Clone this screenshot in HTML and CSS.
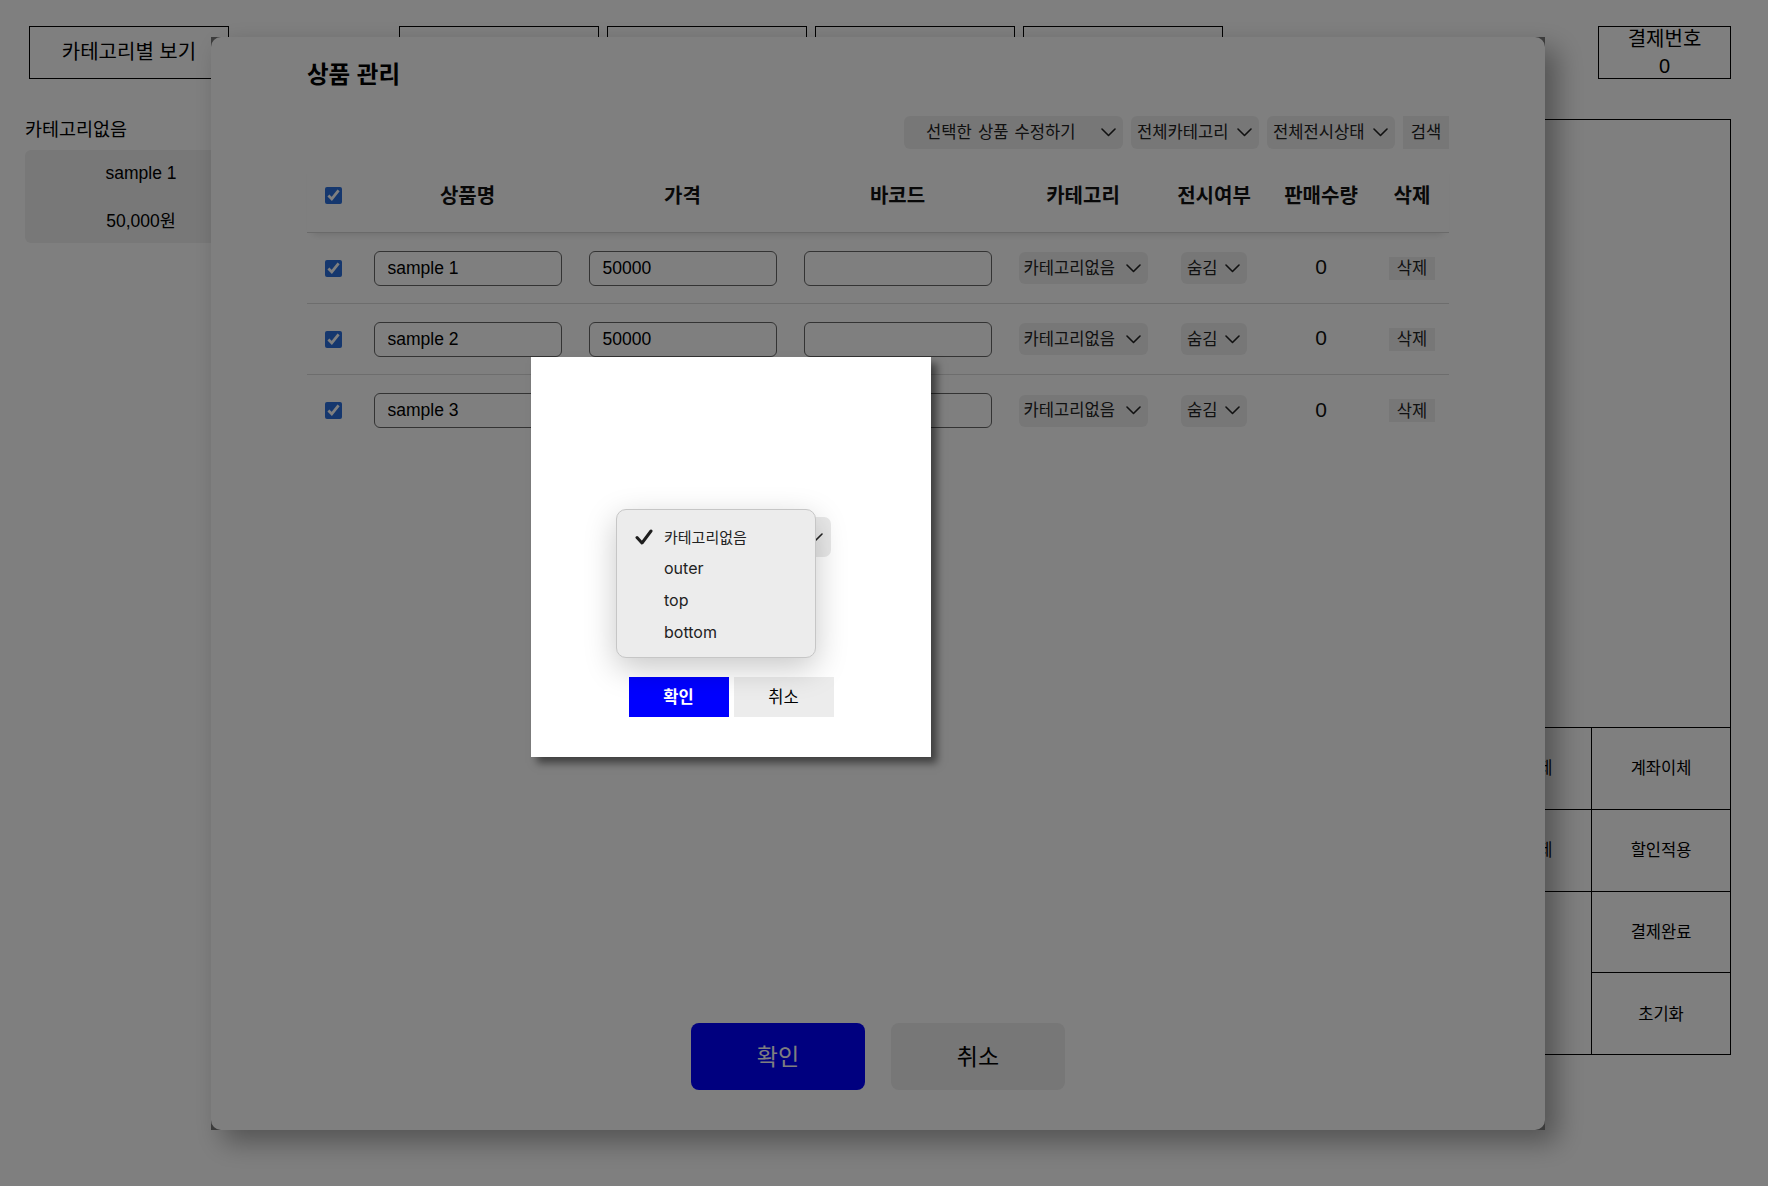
FILE: index.html
```html
<!DOCTYPE html>
<html lang="ko">
<head>
<meta charset="utf-8">
<title>상품 관리</title>
<link rel="stylesheet" href="styles.css">
</head>
<body>
<div class="page">
  <aside class="sidebar">
    <div class="cat-toggle">카테고리별 보기</div>
    <div class="cat-title">카테고리없음</div>
    <div class="product-card">
      <div>sample 1</div>
      <div>50,000원</div>
    </div>
  </aside>
  <main class="center">
    <div class="tabs">
      <div class="tab"></div>
      <div class="tab"></div>
      <div class="tab"></div>
      <div class="tab"></div>
    </div>
  </main>
  <aside class="payment">
    <div class="pay-no"><span>결제번호</span><span>0</span></div>
    <div class="pay-panel">
      <div class="pay-list"></div>
      <div class="pay-grid">
        <div class="pg-cell">카드결제</div>
        <div class="pg-cell">현금결제</div>
        <div class="pg-cell">계좌이체</div>
        <div class="pg-cell">포인트</div>
        <div class="pg-cell">분할결제</div>
        <div class="pg-cell">할인적용</div>
        <div class="pg-cell pg-total">총 결제금액</div>
        <div class="pg-cell">결제완료</div>
        <div class="pg-cell">초기화</div>
      </div>
    </div>
  </aside>
</div>

<div class="modal">
  <div class="modal-inner">
    <h2 class="modal-title">상품 관리</h2>
    <div class="toolbar">
      <div class="sel sel-wide"><span>선택한 상품 수정하기</span><svg class="chev" viewBox="0 0 15 9"><polyline points="1,1 7.5,7.5 14,1"/></svg></div>
      <div class="sel sel-mid"><span>전체카테고리</span><svg class="chev" viewBox="0 0 15 9"><polyline points="1,1 7.5,7.5 14,1"/></svg></div>
      <div class="sel sel-mid"><span>전체전시상태</span><svg class="chev" viewBox="0 0 15 9"><polyline points="1,1 7.5,7.5 14,1"/></svg></div>
      <div class="btn-search">검색</div>
    </div>

    <div class="trow thead">
      <input class="chk" type="checkbox" checked>
      <div>상품명</div>
      <div>가격</div>
      <div>바코드</div>
      <div>카테고리</div>
      <div>전시여부</div>
      <div>판매수량</div>
      <div>삭제</div>
    </div>
    <div class="tbody">
      <div class="trow">
        <input class="chk" type="checkbox" checked>
        <input class="inp" type="text" value="sample 1">
        <input class="inp" type="text" value="50000">
        <input class="inp" type="text" value="">
        <div class="sel sel-row"><span>카테고리없음</span><svg class="chev" viewBox="0 0 15 9"><polyline points="1,1 7.5,7.5 14,1"/></svg></div>
        <div class="sel sel-sm"><span>숨김</span><svg class="chev" viewBox="0 0 15 9"><polyline points="1,1 7.5,7.5 14,1"/></svg></div>
        <div class="qty">0</div>
        <div class="btn-del">삭제</div>
      </div>
      <div class="trow">
        <input class="chk" type="checkbox" checked>
        <input class="inp" type="text" value="sample 2">
        <input class="inp" type="text" value="50000">
        <input class="inp" type="text" value="">
        <div class="sel sel-row"><span>카테고리없음</span><svg class="chev" viewBox="0 0 15 9"><polyline points="1,1 7.5,7.5 14,1"/></svg></div>
        <div class="sel sel-sm"><span>숨김</span><svg class="chev" viewBox="0 0 15 9"><polyline points="1,1 7.5,7.5 14,1"/></svg></div>
        <div class="qty">0</div>
        <div class="btn-del">삭제</div>
      </div>
      <div class="trow">
        <input class="chk" type="checkbox" checked>
        <input class="inp" type="text" value="sample 3">
        <input class="inp" type="text" value="50000">
        <input class="inp" type="text" value="">
        <div class="sel sel-row"><span>카테고리없음</span><svg class="chev" viewBox="0 0 15 9"><polyline points="1,1 7.5,7.5 14,1"/></svg></div>
        <div class="sel sel-sm"><span>숨김</span><svg class="chev" viewBox="0 0 15 9"><polyline points="1,1 7.5,7.5 14,1"/></svg></div>
        <div class="qty">0</div>
        <div class="btn-del">삭제</div>
      </div>
    </div>

    <div class="spacer"></div>
    <div class="footer">
      <div class="fbtn fbtn-ok">확인</div>
      <div class="fbtn fbtn-cancel">취소</div>
    </div>
  </div>
</div>

<div class="dim"></div>

<div class="dialog">
  <div class="dsel"><span class="dsel-text">카테고리없음</span><svg class="chev" viewBox="0 0 15 9"><polyline points="1,1 7.5,7.5 14,1"/></svg></div>
  <div class="dbtns">
    <div class="dbtn dbtn-ok">확인</div>
    <div class="dbtn dbtn-cancel">취소</div>
  </div>
  <div class="popup">
    <div class="item ko"><svg class="check" viewBox="0 0 18 16"><path d="M2 8.5 L7 14 L16 2"/></svg>카테고리없음</div>
    <div class="item">outer</div>
    <div class="item">top</div>
    <div class="item">bottom</div>
  </div>
</div>
</body>
</html>
```
FILE: styles.css
```css
* { box-sizing: border-box; }
html, body { margin: 0; padding: 0; }
body {
  width: 1768px;
  height: 1186px;
  overflow: hidden;
  background: #fff;
  color: #000;
  font-family: "Liberation Sans", "Noto Sans CJK KR", sans-serif;
}

/* ---------- background page ---------- */
.page {
  display: flex;
  height: 100%;
  padding: 26px 37px 0 25px;
}
.sidebar { width: 232px; flex: none; }
.cat-toggle {
  margin-left: 4px;
  width: 200px;
  height: 53px;
  border: 1px solid #000;
  display: flex;
  align-items: center;
  justify-content: center;
  padding-bottom: 4px;
  font-size: 20px;
}
.cat-title {
  margin-top: 38px;
  font-size: 18.5px;
  line-height: 26px;
}
.product-card {
  margin-top: 7px;
  background: #f0f0f0;
  border-radius: 6px;
  padding: 11px 0 10px;
  display: flex;
  flex-direction: column;
  align-items: center;
  gap: 24px;
  font-size: 17.5px;
  line-height: 24px;
}
.center { flex: 1; padding-left: 142px; }
.tabs { display: flex; gap: 8px; }
.tab { width: 200px; height: 53px; border: 1px solid #000; }

.payment {
  width: 418px;
  flex: none;
  display: flex;
  flex-direction: column;
  align-items: flex-end;
}
.pay-no {
  width: 133px;
  height: 53px;
  border: 1px solid #000;
  display: flex;
  flex-direction: column;
  align-items: center;
  justify-content: center;
  font-size: 20px;
  line-height: 27px;
}
.pay-panel {
  margin-top: 40px;
  width: 100%;
  height: 936px;
  border: 1px solid #000;
  display: flex;
  flex-direction: column;
}
.pay-list { flex: 1; }
.pay-grid {
  height: 327px;
  border-top: 1px solid #000;
  background: #000;
  display: grid;
  grid-template-columns: 138px 138px 138px;
  grid-template-rows: repeat(4, 1fr);
  gap: 1px;
}
.pg-cell {
  background: #fff;
  display: flex;
  align-items: center;
  justify-content: center;
  padding-bottom: 2px;
  font-size: 16.5px;
}
.pg-total { grid-column: 1 / 3; grid-row: 3 / 5; }

/* ---------- product modal ---------- */
.modal {
  position: fixed;
  left: 211px;
  top: 37px;
  width: 1334px;
  height: 1093px;
  background: #787878;
  box-shadow: 12px 12px 26px rgba(0, 0, 0, 0.35);
  z-index: 10;
}
.modal-inner {
  height: 100%;
  background: #fff;
  border-radius: 10px;
  display: flex;
  flex-direction: column;
  padding: 22px 96px 40px;
}
.modal-title {
  margin: 0;
  font-size: 23.5px;
  line-height: 32px;
  font-weight: 700;
}
.toolbar {
  margin-top: 25px;
  display: flex;
  justify-content: flex-end;
  gap: 8px;
}
.sel {
  height: 33px;
  background: #efefef;
  border-radius: 6px;
  display: flex;
  align-items: center;
  justify-content: space-between;
  padding: 0 7px 3px 6px;
  font-size: 16.6px;
  color: #222;
  white-space: nowrap;
  word-spacing: 1.5px;
}
.sel .chev { margin-top: 3px; }
.chev {
  width: 15px;
  height: 9px;
  flex: none;
  fill: none;
  stroke: #222;
  stroke-width: 1.6;
  stroke-linecap: round;
  stroke-linejoin: round;
}
.sel-wide { width: 219px; padding-left: 22px; }
.sel-mid { width: 128px; }
.btn-search {
  width: 46px;
  height: 33px;
  background: #efefef;
  display: flex;
  align-items: center;
  justify-content: center;
  padding-bottom: 3px;
  font-size: 16.6px;
  color: #222;
}

.trow {
  display: grid;
  grid-template-columns: 53px 215px 215px 215px 156px 106px 108px 74px;
  align-items: center;
  justify-items: center;
}
.thead {
  margin-top: 10px;
  height: 74px;
  padding-bottom: 2px;
  border-bottom: 1px solid #d4d4d4;
  box-shadow: 0 6px 8px -6px rgba(0, 0, 0, 0.18);
  font-size: 20px;
  font-weight: 700;
  color: #111;
}
.thead .chk { margin-top: 2px; }
.tbody .trow {
  height: 71px;
  border-bottom: 1px solid #dadada;
}
.tbody .trow:last-child { border-bottom: none; }
.chk {
  width: 17px;
  height: 17px;
  margin: 0;
  accent-color: #2a6fdc;
}
.inp {
  width: 188px;
  height: 35px;
  border: 1px solid #666;
  border-radius: 6px;
  padding: 0 13px;
  font-family: "Liberation Sans", sans-serif;
  font-size: 17.5px;
  color: #000;
  background: #fff;
  outline: none;
}
.sel-row { width: 129px; height: 32px; padding-left: 5px; }
.sel-sm { width: 66px; height: 32px; }
.qty { font-size: 21px; color: #111; padding-bottom: 2px; }
.btn-del {
  width: 46px;
  height: 23px;
  background: #efefef;
  display: flex;
  align-items: center;
  justify-content: center;
  padding-bottom: 2px;
  font-size: 16.5px;
  color: #222;
}
.spacer { flex: 1; }
.footer {
  display: flex;
  justify-content: center;
  gap: 26px;
}
.fbtn {
  width: 174px;
  height: 67px;
  border-radius: 8px;
  display: flex;
  align-items: center;
  justify-content: center;
  padding-bottom: 4px;
  font-size: 23px;
}
.fbtn-ok { background: #0000ff; color: #fff; }
.fbtn-cancel { background: #eeeeee; color: #000; }

/* ---------- dim layer ---------- */
.dim {
  position: fixed;
  inset: 0;
  background: rgba(0, 0, 0, 0.5);
  z-index: 20;
}

/* ---------- small dialog ---------- */
.dialog {
  position: fixed;
  left: 531px;
  top: 357px;
  width: 400px;
  height: 400px;
  background: #fff;
  box-shadow: 6px 6px 8px rgba(0, 0, 0, 0.5);
  z-index: 30;
  display: flex;
  flex-direction: column;
  align-items: center;
  padding-top: 160px;
}
.dsel {
  width: 200px;
  height: 40px;
  background: #e9e9e9;
  border-radius: 7px;
  display: flex;
  align-items: center;
  justify-content: space-between;
  padding: 0 8px 0 12px;
  font-size: 15px;
  color: #222;
}
.dsel-text { visibility: hidden; }
.dbtns {
  margin-top: 120px;
  display: flex;
  gap: 5px;
}
.dbtn {
  width: 100px;
  height: 40px;
  display: flex;
  align-items: center;
  justify-content: center;
  padding-bottom: 3px;
  font-size: 16.5px;
}
.dbtn-ok { background: #0000ff; color: #fff; font-weight: 700; }
.dbtn-cancel { background: #ececec; color: #000; }

.popup {
  position: absolute;
  left: 85px;
  top: 152px;
  width: 200px;
  height: 149px;
  background: #ececec;
  border: 1px solid #c6c6c6;
  border-radius: 10px;
  box-shadow: 0 10px 32px rgba(0, 0, 0, 0.22);
  padding-top: 10px;
  font-family: Inter, "Noto Sans CJK KR", sans-serif;
}
.item {
  position: relative;
  height: 32px;
  display: flex;
  align-items: center;
  padding-left: 47px;
  font-size: 16px;
  color: #222;
}
.item.ko { font-size: 15px; }
.check {
  position: absolute;
  left: 18px;
  top: 9px;
  width: 18px;
  height: 16px;
  fill: none;
  stroke: #1e1e1e;
  stroke-width: 3;
  stroke-linecap: round;
  stroke-linejoin: round;
}
```
